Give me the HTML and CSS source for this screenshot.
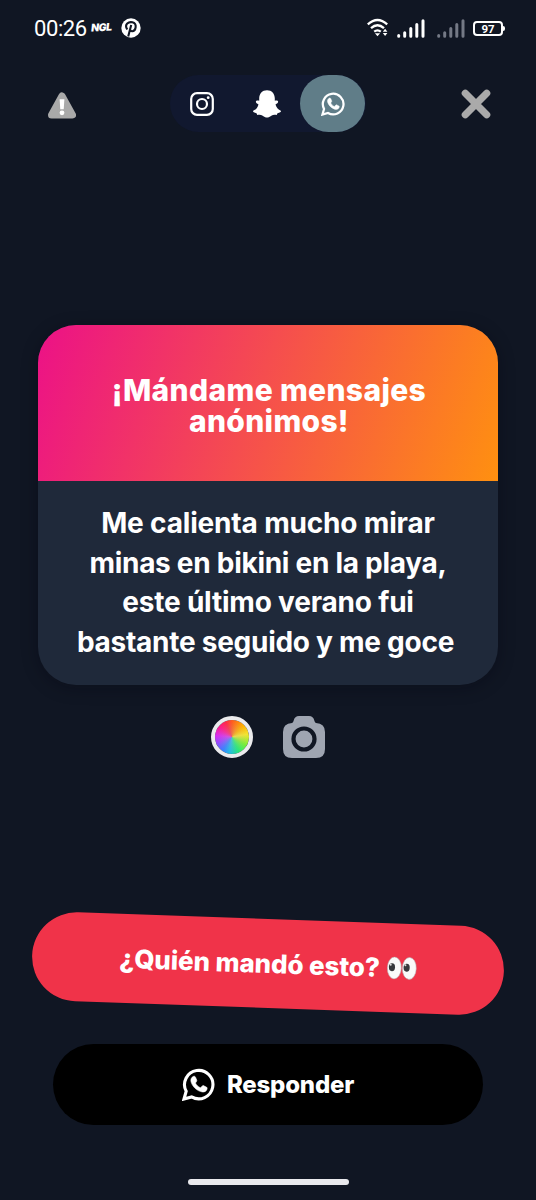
FILE: index.html
```html
<!DOCTYPE html>
<html lang="es">
<head>
<meta charset="utf-8">
<title>NGL</title>
<link rel="stylesheet" href="styles.css">
</head>
<body>
<svg class="defs" width="0" height="0" aria-hidden="true">
  <symbol id="whatsapp" viewBox="0 0 33 33">
    <path d="M2 31 4.2 23.3A14.2 14.2 0 1 1 9.6 28.9Z" fill="none" stroke="currentColor" stroke-width="3.1" stroke-linejoin="miter"/>
    <path d="M11.2 8.5C12.3 8 13.1 8.3 13.5 9.2L14.7 12C15 12.9 14.7 13.4 13.4 15C14.7 17.4 16.2 18.9 18.5 19.8L20.4 17.9C20.8 17.5 21.3 17.5 21.8 17.8L24.7 19.3C25.3 19.7 25.2 20.5 24.9 21.4C24.2 23.4 22.2 24.2 20.2 23.9C15.1 23.1 10.2 18.5 9 13.6C8.5 11.4 9.4 9.4 11.2 8.5Z" fill="currentColor" stroke="currentColor" stroke-width=".6"/>
  </symbol>
</svg>
<main class="screen">
  <header class="status">
    <div class="status-left">
      <span class="clock">00:26</span>
      <span class="ngl">NGL</span>
      <svg class="pin" viewBox="0 0 20 20"><circle cx="10" cy="10" r="9.7" fill="#fff"/><path d="M10.2 7.1 7.2 18.5M6.3 11.5C2.7 6.2 8 3.5 11.4 4.3C16.8 5.7 14.7 13.3 11.2 13.2C9.7 13.1 9.1 12.3 9.1 11.5" fill="none" stroke="#101623" stroke-width="2.1"/></svg>
    </div>
    <div class="status-right">
      <svg class="wifi" viewBox="0 0 22 20"><g fill="none" stroke="#fff" stroke-width="2.3"><path d="M.8 6.3Q10.5-2.4 20.2 6.3M4 10.1Q10.5 4.4 17 10.1M7.2 13.7Q10.5 11.1 13.8 13.7"/></g><path d="M7.9 15.2H13.1L10.5 18.3ZM15.8 13.7H20.4L18.1 10.7ZM15.8 15.1H20.4L18.1 18.1Z" fill="#fff"/></svg>
      <svg class="signal" viewBox="0 0 28 19"><path d="M1.7 17.3v-.8M7.7 17.3v-3.6M13.8 17.3V9.6M19.8 17.3V5.6M26 17.3V1.7"/></svg>
      <svg class="signal dim" viewBox="0 0 28 19"><path d="M1.7 17.3v-.8M7.7 17.3v-3.6M13.8 17.3V9.6M19.8 17.3V5.6M26 17.3V1.7"/></svg>
      <div class="battery"><span class="level">97</span><span class="cap"></span></div>
    </div>
  </header>

  <nav class="topbar">
    <svg class="warn" viewBox="0 0 28 27"><path d="M14 4 24.5 23H3.5Z" fill="#a9a9a9" stroke="#a9a9a9" stroke-width="7" stroke-linejoin="round"/><path d="M11.6 7.2h4.8l-.7 10h-3.4Z" fill="#fff"/><circle cx="14" cy="20.8" r="2.4" fill="#fff"/></svg>
    <div class="tabs">
      <div class="tab"><svg class="insta" viewBox="0 0 24 24"><g fill="none" stroke="#fff" stroke-width="2.2"><rect x="1.2" y="1.2" width="21.6" height="21.6" rx="5.8"/><circle cx="12" cy="12" r="5"/></g><circle cx="18.2" cy="5.7" r="1.4" fill="#fff"/></svg></div>
      <div class="tab"><svg class="snap" viewBox="0 0 28 28"><path d="M14 .2C18.8.2 21.8 3.7 21.8 8.3V10.8C23 10.3 24.8 10.2 25.1 11.4C25.3 12.6 24.2 13.5 22.5 14.4C23.4 17.5 25 19.5 27.4 20.4C28.5 21 27.7 22.1 26.7 22.5L24.5 23.2 23.7 25C21.7 24.7 19.9 24.7 18.3 25.8C15.4 28.2 12.6 28.2 9.7 25.8C8.1 24.7 6.3 24.7 4.3 25L3.5 23.2 1.3 22.5C.3 22.1-.5 21 .6 20.4C3 19.5 4.6 17.5 5.5 14.4C3.8 13.5 2.7 12.6 2.9 11.4C3.2 10.2 5 10.3 6.2 10.8V8.3C6.2 3.7 9.2.2 14 .2Z" fill="#fff"/></svg></div>
      <div class="tab active"><svg class="wa-small"><use href="#whatsapp"/></svg></div>
    </div>
    <svg class="close" viewBox="0 0 30 30"><path d="M4.3 4.3 25.7 25.7M25.7 4.3 4.3 25.7" stroke="#aaa" stroke-width="7.2" stroke-linecap="round"/></svg>
  </nav>

  <section class="card">
    <h1 class="prompt"><span class="line p1">¡Mándame mensajes</span><span class="line p2">anónimos!</span></h1>
    <p class="message"><span class="line m1">Me calienta mucho mirar</span><span class="line m2">minas en bikini en la playa,</span><span class="line m3">este último verano fui</span><span class="line m4">bastante seguido y me goce</span></p>
  </section>

  <div class="tools">
    <div class="wheel"></div>
    <svg class="camera" viewBox="0 0 42 42"><path d="M9 7Q10.200 6.500 10.700 4.500Q11.700 0 16 0H26Q30.300 0 31.300 4.500Q31.800 6.500 33 7Q42 7.500 42 16V33Q42 42 33 42H9Q0 42 0 33V16Q0 7.500 9 7Z" fill="#9fa5b1"/><circle cx="21" cy="23" r="10.500" fill="none" stroke="#101623" stroke-width="4.200"/></svg>
  </div>

  <div class="ask">
    <span class="ask-label">¿Quién mandó esto?</span>
    <svg class="eyes" viewBox="0 0 30 23"><g fill="#fafafa" stroke="#b8afb2" stroke-width=".6"><ellipse cx="7.400" cy="11.500" rx="7" ry="11"/><ellipse cx="22.400" cy="11.500" rx="7" ry="11"/></g><g fill="#37393d"><ellipse cx="5" cy="10.800" rx="3.100" ry="4"/><ellipse cx="19.700" cy="10.800" rx="3.100" ry="4"/></g><circle cx="3.700" cy="8.500" r="1" fill="#ddd"/><circle cx="18.400" cy="8.500" r="1" fill="#ddd"/></svg>
  </div>

  <div class="reply"><svg class="wa-big"><use href="#whatsapp"/></svg><span class="reply-label">Responder</span></div>
  <div class="home"></div>
</main>
</body>
</html>
```
FILE: styles.css
```css
* { box-sizing: border-box; }
body { margin: 0; background: #101623; color: #fff; font-family: Inter, "Liberation Sans", sans-serif; }
svg { display: block; flex: none; }
.defs { position: absolute; }
.screen { width: 536px; height: 1200px; display: flex; flex-direction: column; align-items: center; overflow: hidden; }

.status { width: 100%; height: 56px; padding: 0 31px 0 34px; display: flex; justify-content: space-between; align-items: center; }
.status-left, .status-right { display: flex; align-items: center; }
.clock { width: 57px; font: 22px/26px Roboto, sans-serif; letter-spacing: -0.4px; padding-top: 2px; white-space: nowrap; }
.ngl { width: 21px; font-size: 10.5px; font-weight: 900; font-style: italic; line-height: 12px; letter-spacing: -0.5px; transform: rotate(-3deg); }
.pin { width: 20px; height: 20px; margin-left: 9px; }
.wifi { width: 22px; height: 20px; margin-right: 8px; }
.signal { width: 28px; height: 19px; margin-right: 12px; fill: none; stroke: #fff; stroke-width: 3; stroke-linecap: round; }
.dim { stroke: #747985; margin-right: 8px; }
.battery { display: flex; align-items: center; }
.level { width: 30px; height: 15px; border: 2px solid #fff; border-radius: 4px; font: 700 11.5px/12px Roboto, sans-serif; text-align: center; }
.cap { width: 2px; height: 5px; background: #fff; border-radius: 0 2px 2px 0; }

.topbar { width: 100%; height: 57px; margin-top: 19px; padding: 0 45px 0 48px; display: flex; justify-content: space-between; align-items: center; }
.warn { width: 28px; height: 27px; margin-top: 4px; }
.tabs { width: 196px; height: 57px; margin-right: 2px; display: flex; background: #11182f; border-radius: 29px; }
.tab { flex: 1; display: flex; align-items: center; justify-content: center; }
.active { background: #607d88; border-radius: 29px; }
.insta { width: 24px; height: 24px; }
.snap { width: 28px; height: 28px; }
.wa-small { width: 24px; height: 24px; }
.close { width: 30px; height: 30px; }

.card { width: 460px; height: 360px; margin-top: 193px; border-radius: 38px; overflow: hidden; background: #1f293a; box-shadow: 0 3px 16px rgba(5, 7, 18, .35); text-align: center; white-space: nowrap; }
.line { display: block; }
.prompt { height: 156px; margin: 0; padding: 50px 0 0 2px; background: linear-gradient(109deg, #ec1187 0%, #ff9010 100%); font-size: 30px; font-weight: 800; line-height: 31px; }
.p1 { letter-spacing: .35px; }
.p2 { letter-spacing: .3px; }
.message { margin: 0; padding-top: 23px; font-size: 28px; font-weight: 700; line-height: 39.5px; }
.m1 { letter-spacing: -.17px; }
.m2 { letter-spacing: -.28px; }
.m3 { letter-spacing: -.2px; }
.m4 { letter-spacing: -.27px; padding-right: 5px; }

.tools { width: 114px; height: 42px; margin-top: 31px; display: flex; justify-content: space-between; }
.wheel { width: 42px; height: 42px; border: 4.5px solid #ebebed; border-radius: 50%; background: radial-gradient(circle, rgba(190,190,190,.35), transparent 55%), conic-gradient(#ff5a1c, #ffb000 45deg, #f4e52c 80deg, #78ee35 120deg, #25e878 155deg, #21b9e5 190deg, #397fff 215deg, #9b45ff 250deg, #d72af0 275deg, #ff1988 310deg, #ff2946 338deg, #ff5a1c); background-origin: border-box; background-clip: padding-box; }
.camera { width: 42px; height: 42px; }

.ask { width: 472px; height: 89px; margin-top: 161px; border-radius: 45px; background: #f03349; display: flex; align-items: center; justify-content: center; gap: 7px; transform: rotate(2deg); white-space: nowrap; }
.ask-label { font-size: 26px; font-weight: 800; line-height: 32px; letter-spacing: -.12px; }
.eyes { width: 30px; height: 23px; }
.reply { width: 430px; height: 81px; margin-top: 36px; border-radius: 41px; background: #000; display: flex; align-items: center; justify-content: center; gap: 12px; }
.wa-big { width: 33px; height: 33px; }
.reply-label { font-size: 24px; font-weight: 800; line-height: 30px; letter-spacing: -.2px; }
.home { width: 161px; height: 6px; margin-top: 54px; border-radius: 3px; background: #e9e9ed; }
```
